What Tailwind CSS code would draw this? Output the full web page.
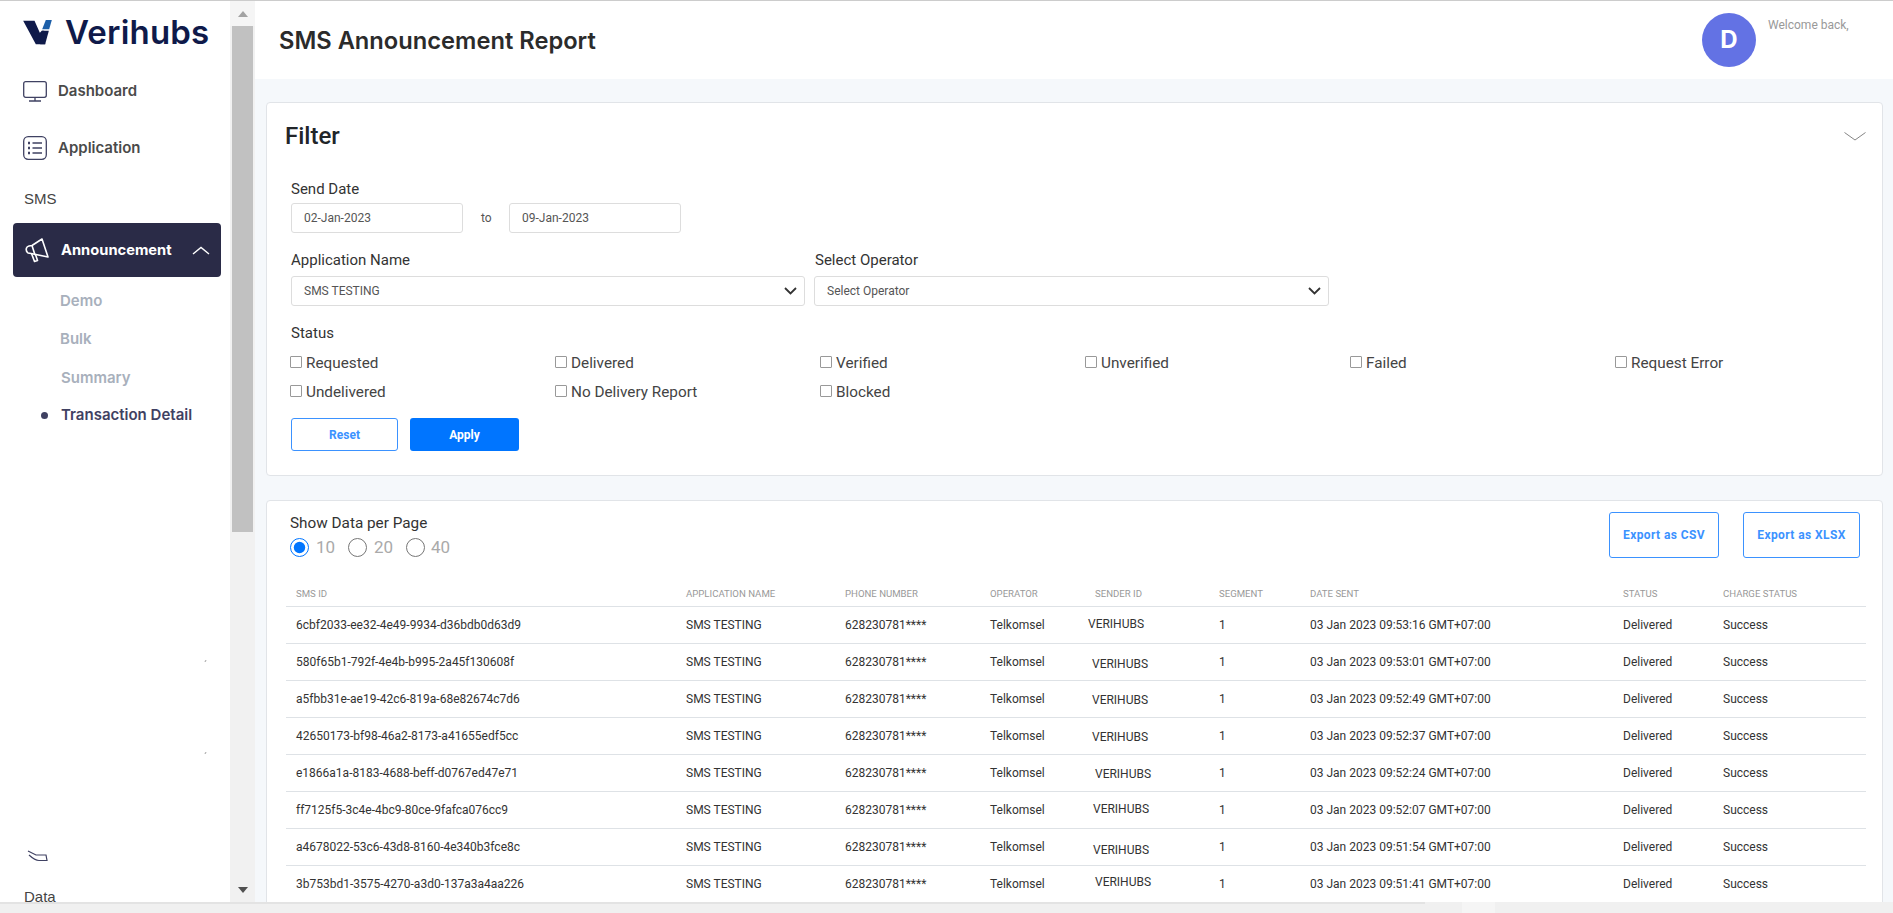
<!DOCTYPE html>
<html lang="en">
<head>
    <meta charset="UTF-8">
    <title>SMS Announcement Report</title>
    <script src="https://cdn.jsdelivr.net/npm/@tailwindcss/browser@4"></script>
</head>
<body class="h-screen overflow-hidden bg-[#f5f8fb] font-['Roboto',sans-serif] text-[#333]">
<div class="flex h-full flex-col border-t border-[#ccc]">
    <div class="flex min-h-0 flex-1">
        <!-- sidebar -->
        <aside class="relative w-[230px] shrink-0 overflow-hidden bg-white font-['Inter',sans-serif]">
            <div class="box-content flex h-[27px] items-center gap-[13px] pl-[23px] pt-[18px]">
                <svg class="h-[25px] w-[29px] shrink-0" viewBox="69 57 86 75">
                    <path fill="#0f1a4a" d="M69 59H103L119 95L125 89H132L135 130H107Z"/>
                    <path fill="#0f1a4a" d="M125 89H146L135 130H120Z"/>
                    <path fill="#1d5fa8" d="M137 57H155L147 85H126Z"/>
                </svg>
                <span class="text-[33px] font-semibold leading-none tracking-[0.2px] text-[#0f1a4a]">Verihubs</span>
            </div>
            <nav class="mt-[35px] flex flex-col">
                <a class="flex h-[21px] items-center gap-[11px] pl-[23px] text-[15px] font-semibold text-[#4a4a4a]">
                    <svg class="h-[21px] w-[24px] shrink-0" viewBox="0 0 24 21" fill="none" stroke="#3f4162" stroke-width="1.3">
                        <rect x="0.7" y="0.7" width="22.6" height="15.6" rx="2"/>
                        <path d="M12 16.5V20M6 20H18"/>
                    </svg>
                    Dashboard
                </a>
                <a class="mt-[34px] flex h-[24px] items-center gap-[11px] pl-[23px] text-[15px] font-semibold text-[#4a4a4a]">
                    <svg class="h-[24px] w-[24px] shrink-0" viewBox="0 0 24 24" fill="none" stroke="#3f4162" stroke-width="1.3">
                        <rect x="0.7" y="0.7" width="22.6" height="22.6" rx="4.5"/>
                        <path d="M9.5 7H19M9.5 12H19M9.5 17H19"/>
                        <path stroke-width="2.4" d="M5 7H7M5 12H7M5 17H7"/>
                    </svg>
                    Application
                </a>
                <p class="mt-[31px] pl-[24px] font-['Liberation_Sans',sans-serif] text-[15px] leading-[16px] text-[#444]">SMS</p>
                <a class="ml-[13px] mr-[9px] mt-[16px] flex h-[54px] items-center rounded bg-[#2a2b47] pl-[12px] pr-[11px] text-[14.7px] font-bold text-white">
                    <svg class="h-[25px] w-[25px] shrink-0" viewBox="0 0 25 25" fill="none" stroke="#fff" stroke-width="1.6" stroke-linejoin="round">
                        <path d="M17 1L23 19L6 15.5L3 15Q0.5 13 1.5 10Q2 8.5 4 8L7 7.5Z"/>
                        <path d="M7 7.5L10 17M6.5 15.5L9.5 23.5L12.5 22.5L10.5 16.5"/>
                    </svg>
                    <span class="ml-[11px] flex-1">Announcement</span>
                    <svg class="h-[9px] w-[18px]" viewBox="0 0 18 9" fill="none" stroke="#fff" stroke-width="1.4"><path d="M1 8L9 1.5L17 8"/></svg>
                </a>
                <div class="flex flex-col text-[15px] font-semibold">
                    <a class="mt-[15px] h-[17px] pl-[60px] leading-[17px] text-[#a8b0bc]">Demo</a>
                    <a class="mt-[21px] h-[17px] pl-[60px] leading-[17px] text-[#a8b0bc]">Bulk</a>
                    <a class="mt-[22px] h-[17px] pl-[61px] leading-[17px] text-[#a8b0bc]">Summary</a>
                    <a class="mt-[21px] flex h-[17px] items-center pl-[41px] text-[#3f4162]"><span class="mr-[13px] size-[7px] rounded-full bg-[#3f4162]"></span>Transaction Detail</a>
                </div>
            </nav>
            <span class="absolute left-[205px] top-[659px] h-[2px] w-[1px] rotate-45 bg-[#999]"></span>
            <span class="absolute left-[205px] top-[751px] h-[2px] w-[1px] rotate-45 bg-[#999]"></span>
            <svg class="absolute left-[27px] top-[849px] h-[12px] w-[21px]" viewBox="0 0 21 12" fill="none" stroke="#3f4162" stroke-width="1.2"><path d="M1 1L9 5H19L20 10.5H12Q8 10.5 2 5"/></svg>
            <p class="absolute left-[24px] top-[888px] font-['Liberation_Sans',sans-serif] text-[15px] leading-[16px] text-[#444]">Data</p>
        </aside>
        <!-- sidebar scrollbar -->
        <div class="flex w-[25px] shrink-0 flex-col bg-[#f1f1f1]">
            <div class="flex h-[25px] items-center justify-center bg-[#f5f5f5]"><span class="border-x-[5.5px] border-b-[6px] border-x-transparent border-b-[#a3a3a3]"></span></div>
            <div class="mx-[2px] h-[506px] bg-[#c1c1c1]"></div>
            <div class="flex flex-1 items-end justify-center pb-[9px]"><span class="border-x-[5.5px] border-t-[6px] border-x-transparent border-t-[#505050]"></span></div>
        </div>
        <main class="min-w-0 flex-1 overflow-hidden">
            <header class="flex h-[78px] items-center bg-white">
                <h1 class="ml-[24px] mt-[1px] flex-1 font-['Inter',sans-serif] text-[23.7px] font-semibold text-[#2b2b2b]">SMS Announcement Report</h1>
                <div class="flex h-full w-[191px] items-center">
                    <div class="flex size-[54px] items-center justify-center rounded-full bg-[#6372e4] font-['Inter',sans-serif] text-2xl font-bold text-white">D</div>
                    <p class="mb-[30px] ml-[12px] text-xs text-[#999]">Welcome back,</p>
                </div>
            </header>
            <div class="ml-[11px] mr-[10px] mt-[23px] flex flex-col gap-[24px]">
                <!-- filter -->
                <section class="relative h-[374px] rounded border border-[#e1e4e8] bg-white pl-[24px]">
                    <svg class="absolute right-[16px] top-[29px] h-[9px] w-[22px]" viewBox="0 0 22 9" fill="none" stroke="#666" stroke-width="0.8"><path d="M0.5 0.5L11 8L21.5 0.5"/></svg>
                    <h2 class="-ml-[6px] mt-[18px] text-2xl font-medium leading-[30px] text-[#212529]">Filter</h2>
                    <label class="mt-[28px] block text-[15px] leading-[20px]">Send Date</label>
                    <div class="mt-[4px] flex h-[30px] items-center text-xs">
                        <input class="h-full w-[172px] rounded-[3px] border border-[#ddd] pl-[12px] text-xs text-[#555]" value="02-Jan-2023">
                        <span class="ml-[18px] mr-[17px] w-[11px] text-[#555]">to</span>
                        <input class="h-full w-[172px] rounded-[3px] border border-[#ddd] pl-[12px] text-xs text-[#555]" value="09-Jan-2023">
                    </div>
                    <div class="mt-[17px] flex gap-[9px] text-[15px]">
                        <div class="w-[514px]">
                            <label class="block leading-[20px]">Application Name</label>
                            <div class="relative mt-[6px]">
                                <select class="h-[30px] w-full appearance-none rounded-[3px] border border-[#ddd] bg-white pl-[12px] text-xs text-[#555]"><option>SMS TESTING</option></select>
                                <svg class="pointer-events-none absolute right-[8px] top-[11px] h-[8px] w-[13px]" viewBox="0 0 13 8" fill="none" stroke="#333" stroke-width="1.8"><path d="M1 1L6.5 6.5L12 1"/></svg>
                            </div>
                        </div>
                        <div class="w-[515px]">
                            <label class="block pl-[1px] leading-[20px]">Select Operator</label>
                            <div class="relative mt-[6px]">
                                <select class="h-[30px] w-full appearance-none rounded-[3px] border border-[#ddd] bg-white pl-[12px] text-xs text-[#555]"><option>Select Operator</option></select>
                                <svg class="pointer-events-none absolute right-[8px] top-[11px] h-[8px] w-[13px]" viewBox="0 0 13 8" fill="none" stroke="#333" stroke-width="1.8"><path d="M1 1L6.5 6.5L12 1"/></svg>
                            </div>
                        </div>
                    </div>
                    <label class="mt-[17px] block text-[15px] leading-[20px]">Status</label>
                    <div class="-ml-[1px] mt-[10px] grid grid-cols-[repeat(6,265px)] gap-y-[9px] text-[15.3px] leading-[20px] text-[#444]">
                        <label class="flex items-center gap-[4px]"><input type="checkbox" class="m-0 mb-[2px] size-[12px] appearance-none rounded-[1px] border-[1.5px] border-[#999]">Requested</label>
                        <label class="flex items-center gap-[4px]"><input type="checkbox" class="m-0 mb-[2px] size-[12px] appearance-none rounded-[1px] border-[1.5px] border-[#999]">Delivered</label>
                        <label class="flex items-center gap-[4px]"><input type="checkbox" class="m-0 mb-[2px] size-[12px] appearance-none rounded-[1px] border-[1.5px] border-[#999]">Verified</label>
                        <label class="flex items-center gap-[4px]"><input type="checkbox" class="m-0 mb-[2px] size-[12px] appearance-none rounded-[1px] border-[1.5px] border-[#999]">Unverified</label>
                        <label class="flex items-center gap-[4px]"><input type="checkbox" class="m-0 mb-[2px] size-[12px] appearance-none rounded-[1px] border-[1.5px] border-[#999]">Failed</label>
                        <label class="flex items-center gap-[4px]"><input type="checkbox" class="m-0 mb-[2px] size-[12px] appearance-none rounded-[1px] border-[1.5px] border-[#999]">Request Error</label>
                        <label class="flex items-center gap-[4px]"><input type="checkbox" class="m-0 mb-[2px] size-[12px] appearance-none rounded-[1px] border-[1.5px] border-[#999]">Undelivered</label>
                        <label class="flex items-center gap-[4px]"><input type="checkbox" class="m-0 mb-[2px] size-[12px] appearance-none rounded-[1px] border-[1.5px] border-[#999]">No Delivery Report</label>
                        <label class="flex items-center gap-[4px]"><input type="checkbox" class="m-0 mb-[2px] size-[12px] appearance-none rounded-[1px] border-[1.5px] border-[#999]">Blocked</label>
                    </div>
                    <div class="mt-[16px] flex gap-[12px] text-xs font-bold">
                        <button class="h-[33px] w-[107px] rounded-[3px] border border-[#3b92ff] bg-white text-[#3b92ff]">Reset</button>
                        <button class="h-[33px] w-[109px] rounded-[3px] bg-[#0075ff] text-white">Apply</button>
                    </div>
                </section>
                <!-- results -->
                <section class="h-[500px] rounded border border-[#e1e4e8] bg-white pl-[19px] pr-[17px]">
                    <div class="flex h-[85px]">
                        <div class="flex-1 pl-[4px]">
                            <p class="mt-[12px] text-[15.3px] leading-[20px]">Show Data per Page</p>
                            <div class="mt-[4px] flex items-center text-[17px] leading-[20px] text-[#aaa]">
                                <input type="radio" name="perPage" checked class="m-0 size-[19px] accent-[#0075ff]"><span class="ml-[7px] w-[32px]">10</span>
                                <input type="radio" name="perPage" class="m-0 size-[19px]"><span class="ml-[7px] w-[32px]">20</span>
                                <input type="radio" name="perPage" class="m-0 size-[19px]"><span class="ml-[6px]">40</span>
                            </div>
                        </div>
                        <div class="mr-[5px] mt-[11px] flex gap-[24px] text-xs font-bold tracking-[0.4px] text-[#3b92ff]">
                            <button class="h-[46px] w-[110px] rounded-[3px] border border-[#3b92ff]">Export as CSV</button>
                            <button class="h-[46px] w-[117px] rounded-[3px] border border-[#3b92ff]">Export as XLSX</button>
                        </div>
                    </div>
                    <table class="w-[1580px] table-fixed border-collapse text-left text-xs text-[#333]">
                        <colgroup>
                            <col class="w-[390px]"><col class="w-[159px]"><col class="w-[145px]"><col class="w-[98px]"><col class="w-[131px]"><col class="w-[91px]"><col class="w-[313px]"><col class="w-[100px]"><col>
                        </colgroup>
                        <thead class="text-[9.6px] uppercase text-[#999]">
                            <tr class="h-[20px] border-b border-[#dee2e6]">
                                <th class="pb-[3px] pl-[10px] font-normal">SMS ID</th><th class="pb-[3px] pl-[10px] font-normal">Application Name</th><th class="pb-[3px] pl-[10px] font-normal">Phone Number</th><th class="pb-[3px] pl-[10px] font-normal">Operator</th><th class="pb-[3px] pl-[17px] font-normal">Sender ID</th><th class="pb-[3px] pl-[10px] font-normal">Segment</th><th class="pb-[3px] pl-[10px] font-normal">Date Sent</th><th class="pb-[3px] pl-[10px] font-normal">Status</th><th class="pb-[3px] pl-[10px] font-normal">Charge Status</th>
                            </tr>
                        </thead>
                        <tbody class="[&_td]:pl-[10px]">
                            <tr class="h-[37px] border-b border-[#dee2e6]"><td>6cbf2033-ee32-4e49-9934-d36bdb0d63d9</td><td>SMS TESTING</td><td>628230781****</td><td>Telkomsel</td><td><span class="inline-block -translate-y-[1px]">VERIHUBS</span></td><td>1</td><td>03 Jan 2023 09:53:16 GMT+07:00</td><td>Delivered</td><td>Success</td></tr>
                            <tr class="h-[37px] border-b border-[#dee2e6]"><td>580f65b1-792f-4e4b-b995-2a45f130608f</td><td>SMS TESTING</td><td>628230781****</td><td>Telkomsel</td><td><span class="ml-[4px] inline-block translate-y-[2px]">VERIHUBS</span></td><td>1</td><td>03 Jan 2023 09:53:01 GMT+07:00</td><td>Delivered</td><td>Success</td></tr>
                            <tr class="h-[37px] border-b border-[#dee2e6]"><td>a5fbb31e-ae19-42c6-819a-68e82674c7d6</td><td>SMS TESTING</td><td>628230781****</td><td>Telkomsel</td><td><span class="ml-[4px] inline-block translate-y-[1px]">VERIHUBS</span></td><td>1</td><td>03 Jan 2023 09:52:49 GMT+07:00</td><td>Delivered</td><td>Success</td></tr>
                            <tr class="h-[37px] border-b border-[#dee2e6]"><td>42650173-bf98-46a2-8173-a41655edf5cc</td><td>SMS TESTING</td><td>628230781****</td><td>Telkomsel</td><td><span class="ml-[4px] inline-block translate-y-[1px]">VERIHUBS</span></td><td>1</td><td>03 Jan 2023 09:52:37 GMT+07:00</td><td>Delivered</td><td>Success</td></tr>
                            <tr class="h-[37px] border-b border-[#dee2e6]"><td>e1866a1a-8183-4688-beff-d0767ed47e71</td><td>SMS TESTING</td><td>628230781****</td><td>Telkomsel</td><td><span class="ml-[7px] inline-block translate-y-[1px]">VERIHUBS</span></td><td>1</td><td>03 Jan 2023 09:52:24 GMT+07:00</td><td>Delivered</td><td>Success</td></tr>
                            <tr class="h-[37px] border-b border-[#dee2e6]"><td>ff7125f5-3c4e-4bc9-80ce-9fafca076cc9</td><td>SMS TESTING</td><td>628230781****</td><td>Telkomsel</td><td><span class="ml-[5px] inline-block -translate-y-[1px]">VERIHUBS</span></td><td>1</td><td>03 Jan 2023 09:52:07 GMT+07:00</td><td>Delivered</td><td>Success</td></tr>
                            <tr class="h-[37px] border-b border-[#dee2e6]"><td>a4678022-53c6-43d8-8160-4e340b3fce8c</td><td>SMS TESTING</td><td>628230781****</td><td>Telkomsel</td><td><span class="ml-[5px] inline-block translate-y-[3px]">VERIHUBS</span></td><td>1</td><td>03 Jan 2023 09:51:54 GMT+07:00</td><td>Delivered</td><td>Success</td></tr>
                            <tr class="h-[37px] border-b border-[#dee2e6]"><td>3b753bd1-3575-4270-a3d0-137a3a4aa226</td><td>SMS TESTING</td><td>628230781****</td><td>Telkomsel</td><td><span class="ml-[7px] inline-block -translate-y-[2px]">VERIHUBS</span></td><td>1</td><td>03 Jan 2023 09:51:41 GMT+07:00</td><td>Delivered</td><td>Success</td></tr>
                        </tbody>
                    </table>
                </section>
            </div>
        </main>
    </div>
    <!-- page scrollbar -->
    <div class="flex h-[11px] shrink-0 bg-[#f0f0f0]">
        <div class="h-[2px] w-[1425px] bg-[#e3e3e3]"></div>
        <div class="ml-[37px] h-full w-[33px] bg-[#f5f5f5]"></div>
    </div>
</div>
</body>
</html>
